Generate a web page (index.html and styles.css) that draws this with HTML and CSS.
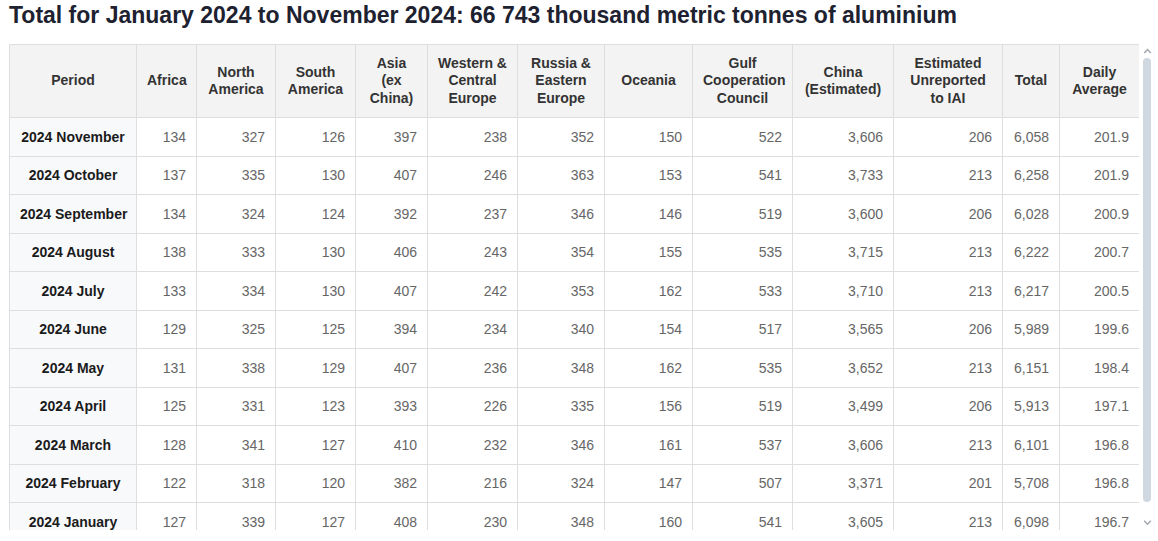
FILE: index.html
```html
<!DOCTYPE html>
<html lang="en">
<head>
<meta charset="utf-8">
<title>Aluminium production</title>
<link rel="stylesheet" href="styles.css">
</head>
<body>
<h1 class="title">Total for January 2024 to November 2024: 66 743 thousand metric tonnes of aluminium</h1>
<div class="table-frame">
<div class="table-wrap">
<table class="data">
<colgroup>
<col style="width:127px"><col style="width:60px"><col style="width:79px"><col style="width:80px"><col style="width:72px"><col style="width:90px"><col style="width:87px"><col style="width:88px"><col style="width:100px"><col style="width:101px"><col style="width:109px"><col style="width:57px"><col style="width:80px">
</colgroup>
<thead>
<tr>
<th>Period</th><th>Africa</th><th>North<br>America</th><th>South<br>America</th><th>Asia<br>(ex<br>China)</th><th>Western &amp;<br>Central<br>Europe</th><th>Russia &amp;<br>Eastern<br>Europe</th><th>Oceania</th><th>Gulf<br>Cooperation<br>Council</th><th>China<br>(Estimated)</th><th>Estimated<br>Unreported<br>to IAI</th><th>Total</th><th>Daily<br>Average</th>
</tr>
</thead>
<tbody>
<tr><th>2024 November</th><td>134</td><td>327</td><td>126</td><td>397</td><td>238</td><td>352</td><td>150</td><td>522</td><td>3,606</td><td>206</td><td>6,058</td><td>201.9</td></tr>
<tr><th>2024 October</th><td>137</td><td>335</td><td>130</td><td>407</td><td>246</td><td>363</td><td>153</td><td>541</td><td>3,733</td><td>213</td><td>6,258</td><td>201.9</td></tr>
<tr><th>2024 September</th><td>134</td><td>324</td><td>124</td><td>392</td><td>237</td><td>346</td><td>146</td><td>519</td><td>3,600</td><td>206</td><td>6,028</td><td>200.9</td></tr>
<tr><th>2024 August</th><td>138</td><td>333</td><td>130</td><td>406</td><td>243</td><td>354</td><td>155</td><td>535</td><td>3,715</td><td>213</td><td>6,222</td><td>200.7</td></tr>
<tr><th>2024 July</th><td>133</td><td>334</td><td>130</td><td>407</td><td>242</td><td>353</td><td>162</td><td>533</td><td>3,710</td><td>213</td><td>6,217</td><td>200.5</td></tr>
<tr><th>2024 June</th><td>129</td><td>325</td><td>125</td><td>394</td><td>234</td><td>340</td><td>154</td><td>517</td><td>3,565</td><td>206</td><td>5,989</td><td>199.6</td></tr>
<tr><th>2024 May</th><td>131</td><td>338</td><td>129</td><td>407</td><td>236</td><td>348</td><td>162</td><td>535</td><td>3,652</td><td>213</td><td>6,151</td><td>198.4</td></tr>
<tr><th>2024 April</th><td>125</td><td>331</td><td>123</td><td>393</td><td>226</td><td>335</td><td>156</td><td>519</td><td>3,499</td><td>206</td><td>5,913</td><td>197.1</td></tr>
<tr><th>2024 March</th><td>128</td><td>341</td><td>127</td><td>410</td><td>232</td><td>346</td><td>161</td><td>537</td><td>3,606</td><td>213</td><td>6,101</td><td>196.8</td></tr>
<tr><th>2024 February</th><td>122</td><td>318</td><td>120</td><td>382</td><td>216</td><td>324</td><td>147</td><td>507</td><td>3,371</td><td>201</td><td>5,708</td><td>196.8</td></tr>
<tr><th>2024 January</th><td>127</td><td>339</td><td>127</td><td>408</td><td>230</td><td>348</td><td>160</td><td>541</td><td>3,605</td><td>213</td><td>6,098</td><td>196.7</td></tr>
</tbody>
</table>
</div>
<div class="scrollbar" aria-hidden="true">
<svg class="sb-arrow" width="9" height="14" viewBox="0 0 9 14"><path d="M1.2 9 L4.5 5.6 L7.8 9" fill="none" stroke="#a2a7ad" stroke-width="1.5"/></svg>
<div class="sb-thumb"></div>
<div class="sb-track"></div>
<svg class="sb-arrow" width="9" height="15" viewBox="0 0 9 15"><path d="M1.2 5.8 L4.5 9.2 L7.8 5.8" fill="none" stroke="#a2a7ad" stroke-width="1.5"/></svg>
</div>
</div>
</body>
</html>
```
FILE: styles.css
```css
html, body {
  margin: 0;
  background: #ffffff;
}
body {
  padding: 1px 4px 0 9px;
  font-family: "Liberation Sans", Arial, sans-serif;
  color: #222;
}
.title {
  margin: 0 0 15px 0;
  font-size: 23px;
  line-height: 28px;
  font-weight: 700;
  color: #1d2130;
}
.table-frame {
  display: flex;
  width: 1145px;
  height: 486px;
}
.table-wrap {
  width: 1130px;
  height: 486px;
  overflow: hidden;
}
.scrollbar {
  width: 15px;
  height: 486px;
  display: flex;
  flex-direction: column;
  align-items: center;
  padding-left: 1px;
  box-sizing: border-box;
}
.sb-arrow {
  display: block;
  flex: none;
}
.sb-thumb {
  width: 8px;
  height: 444px;
  flex: none;
  background: #cfd8e1;
  border-radius: 4px;
}
.sb-track {
  flex: 1;
}
.data {
  border-collapse: collapse;
  table-layout: fixed;
  width: 1130px;
  font-size: 14px;
}
.data th, .data td {
  border: 1px solid #dedede;
  padding: 0 10px;
}
.data thead th {
  background: #f3f3f3;
  color: #333;
  font-weight: 700;
  text-align: center;
  line-height: 17.5px;
  height: 72px;
}
.data tbody th {
  background: #f8f9fb;
  color: #1b1b1b;
  font-weight: 700;
  text-align: center;
  white-space: nowrap;
  height: 37.5px;
}
.data tbody td {
  color: #666;
  text-align: right;
  height: 37.5px;
}
```
